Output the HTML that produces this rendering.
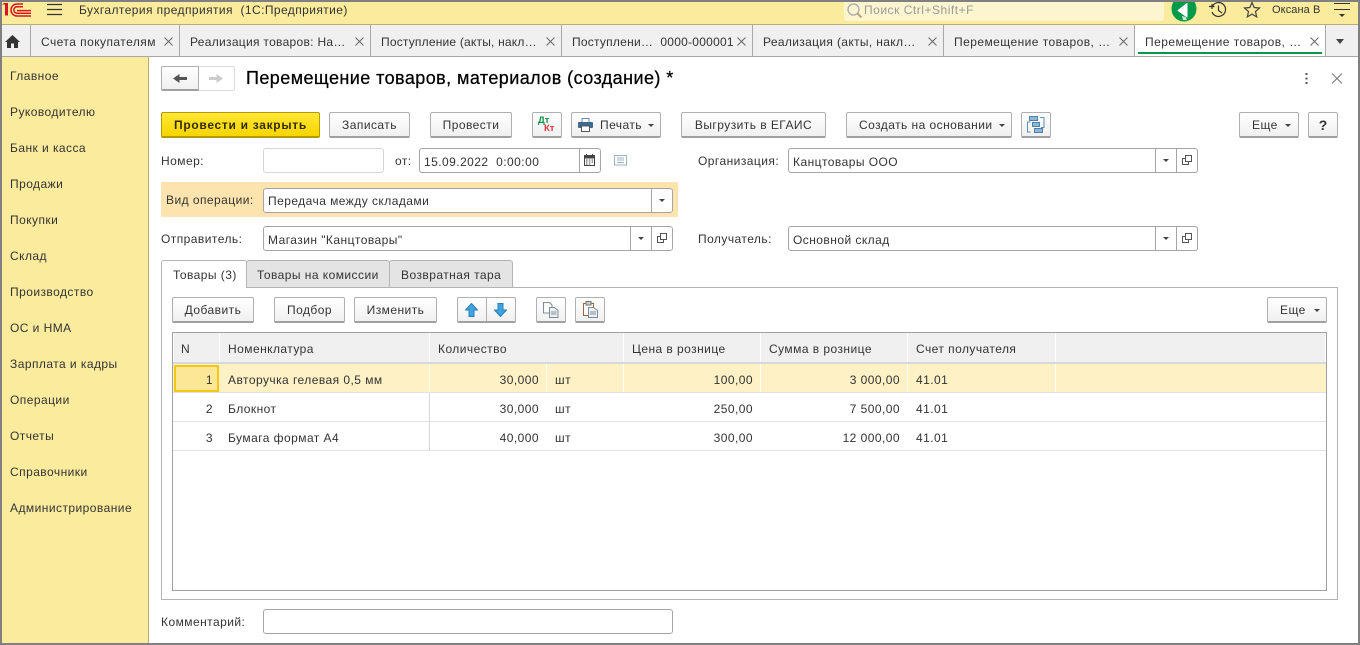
<!DOCTYPE html>
<html lang="ru"><head><meta charset="utf-8"><title>Перемещение товаров</title>
<style>
html,body{margin:0;padding:0;width:1360px;height:645px;overflow:hidden;background:#fff}
body{position:relative;font-family:"Liberation Sans",Arial,sans-serif;font-size:12px;color:#333}
.a,.t,.b,.f,svg{position:absolute}
.t{white-space:nowrap;line-height:16px;letter-spacing:.45px}
.b{box-sizing:border-box;height:26px;top:112px;border:1px solid #b0b0b0;border-bottom:2px solid #a0a0a0;border-radius:2px;background:linear-gradient(#fff,#f0f0f0);text-align:center;line-height:25px;letter-spacing:.45px;white-space:nowrap}
.f{box-sizing:border-box;border:1px solid #a5a5a5;border-radius:3px;background:#fff;height:25px}
.l{position:absolute;background:#d0d0d0}
.s{position:absolute;width:0;height:0;border-left:3px solid transparent;border-right:3px solid transparent;border-top:3px solid #444}
.tab{position:absolute;top:25px;height:31px;background:#f0f0f0;border-right:1px solid #a8a8a8;box-sizing:content-box}
.h{position:absolute;top:333px;height:29px;background:#f0f0f0}
.r{text-align:right}
.x{top:37px}
</style></head><body>
<!-- frame -->
<div class="a" style="left:0;top:0;width:1360px;height:2px;background:#808080"></div>
<div class="a" style="left:0;top:643px;width:1360px;height:2px;background:#808080"></div>
<div class="a" style="left:0;top:0;width:2px;height:645px;background:#808080"></div>
<div class="a" style="left:1358px;top:0;width:2px;height:645px;background:#808080"></div>
<!-- top bar -->
<div class="a" style="left:2px;top:2px;width:1356px;height:22px;background:#fbeb9d"></div>
<div class="a" style="left:2px;top:24px;width:1356px;height:1px;background:#b9ae74"></div>
<svg style="left:2px;top:2px" width="30" height="15" viewBox="0 0 30 15"><path d="M0 2.500h3v11h3V1H2z" fill="#d9141e"/><path d="M29 14H15a6 6 0 0 1 0-12h6M29 11.200H15a3.200 3.200 0 0 1 0-6.400h6M29 8.600H15" fill="none" stroke="#d9141e" stroke-width="1.500"/></svg>
<svg style="left:47px;top:3px" width="15" height="13"><path d="M0 1.500h15M0 6.500h15M0 11.500h15" stroke="#333" stroke-width="1.200"/></svg>
<div class="t" style="left:79px;top:2px;letter-spacing:.42px">Бухгалтерия предприятия&nbsp; (1С:Предприятие)</div>
<div class="a" style="left:844px;top:2px;width:320px;height:19px;background:#fdf5cf;border-radius:0 0 3px 3px"></div>
<svg style="left:846px;top:2px" width="17" height="18"><circle cx="7.500" cy="7.500" r="5.500" fill="none" stroke="#aaa" stroke-width="1.300"/><path d="M11.500 11.500l4 4" stroke="#b8a878" stroke-width="2"/></svg>
<div class="t" style="left:864px;top:2px;color:#999;letter-spacing:.52px">Поиск Ctrl+Shift+F</div>
<svg style="left:1170px;top:2px" width="28" height="21" viewBox="0 0 28 21"><path d="M1.500 7A12.500 12.500 0 0 0 26.500 7c0-2.500-.6-5-1.800-7H3.300C2.100 2 1.500 4.500 1.500 7z" fill="#039a49"/><path d="M8 8.500L17 1.500v13.500z" fill="#fff" stroke="#fff" stroke-linejoin="round"/><path d="M12 14l1 4h4l-1.300-3z" fill="#cfe9d8"/></svg>
<svg style="left:1209px;top:1px" width="19" height="18" viewBox="0 0 19 18"><path d="M3.200 5.500A7 7 0 1 1 3 11" fill="none" stroke="#333" stroke-width="1.200"/><path d="M0 5.500h5.500M3 3v5" stroke="#333" stroke-width="1.200"/><path d="M9.500 4.500v5l3.500 2.500" fill="none" stroke="#333" stroke-width="1.200"/></svg>
<svg style="left:1243px;top:1px" width="18" height="17" viewBox="0 0 18 17"><path d="M9 1.500l2.200 5 5.300.5-4 3.600 1.200 5.300L9 13.100l-4.700 2.800 1.200-5.300-4-3.600 5.300-.5z" fill="none" stroke="#444" stroke-width="1.200"/></svg>
<div class="t" style="left:1272px;top:2px;font-size:11px;letter-spacing:.1px">Оксана В</div>
<svg style="left:1334px;top:3px" width="16" height="15"><path d="M0 .5h16M0 6.500h16" stroke="#333"/><path d="M5 11h6l-3 3z" fill="#333"/></svg>
<!-- tabs -->
<div class="tab" style="left:2px;width:28px"></div>
<svg style="left:5px;top:35px" width="15" height="13" viewBox="0 0 15 13"><path d="M7.500 0L0 7h2v6h4V8.500h3V13h4V7h2z" fill="#333"/></svg>
<div class="tab" style="left:31px;width:148px"></div><div class="t" style="left:41px;top:34px">Счета покупателям</div>
<svg class="x" style="left:164px" width="9" height="9"><path d="M.5.500l8 8M8.500.500l-8 8" stroke="#666"/></svg>
<div class="tab" style="left:180px;width:190px"></div><div class="t" style="left:190px;top:34px;letter-spacing:.3px">Реализация товаров: На…</div>
<svg class="x" style="left:355px" width="9" height="9"><path d="M.5.500l8 8M8.500.500l-8 8" stroke="#666"/></svg>
<div class="tab" style="left:371px;width:190px"></div><div class="t" style="left:381px;top:34px;letter-spacing:.2px">Поступление (акты, накл…</div>
<svg class="x" style="left:546px" width="9" height="9"><path d="M.5.500l8 8M8.500.500l-8 8" stroke="#666"/></svg>
<div class="tab" style="left:562px;width:190px"></div><div class="t" style="left:572px;top:34px;letter-spacing:.25px">Поступлени…&nbsp; 0000-000001</div>
<svg class="x" style="left:737px" width="9" height="9"><path d="M.5.500l8 8M8.500.500l-8 8" stroke="#666"/></svg>
<div class="tab" style="left:753px;width:190px"></div><div class="t" style="left:763px;top:34px;letter-spacing:.35px">Реализация (акты, накл…</div>
<svg class="x" style="left:928px" width="9" height="9"><path d="M.5.500l8 8M8.500.500l-8 8" stroke="#666"/></svg>
<div class="tab" style="left:944px;width:190px"></div><div class="t" style="left:954px;top:34px">Перемещение товаров, …</div>
<svg class="x" style="left:1119px" width="9" height="9"><path d="M.5.500l8 8M8.500.500l-8 8" stroke="#666"/></svg>
<div class="tab" style="left:1135px;width:190px;background:#fff"></div><div class="t" style="left:1145px;top:34px">Перемещение товаров, …</div>
<svg class="x" style="left:1310px" width="9" height="9"><path d="M.5.500l8 8M8.500.500l-8 8" stroke="#666"/></svg>
<div class="a" style="left:1138px;top:52px;width:184px;height:2px;background:#039a49"></div>
<div class="a" style="left:1326px;top:25px;width:32px;height:31px;background:#f0f0f0"></div>
<div class="s" style="left:1336px;top:39px;border-left-width:4px;border-right-width:4px;border-top-width:5px"></div>
<div class="a" style="left:2px;top:56px;width:1356px;height:1px;background:#a8a8a8"></div>
<!-- sidebar -->
<div class="a" style="left:2px;top:57px;width:146px;height:586px;background:#fbeb9d;border-right:1px solid #b9ae74"></div>
<div class="t" style="left:10px;top:68px">Главное</div>
<div class="t" style="left:10px;top:104px">Руководителю</div>
<div class="t" style="left:10px;top:140px">Банк и касса</div>
<div class="t" style="left:10px;top:176px">Продажи</div>
<div class="t" style="left:10px;top:212px">Покупки</div>
<div class="t" style="left:10px;top:248px">Склад</div>
<div class="t" style="left:10px;top:284px">Производство</div>
<div class="t" style="left:10px;top:320px">ОС и НМА</div>
<div class="t" style="left:10px;top:356px">Зарплата и кадры</div>
<div class="t" style="left:10px;top:392px">Операции</div>
<div class="t" style="left:10px;top:428px">Отчеты</div>
<div class="t" style="left:10px;top:464px">Справочники</div>
<div class="t" style="left:10px;top:500px">Администрирование</div>
<!-- title -->
<div class="a" style="box-sizing:border-box;left:161px;top:66px;width:38px;height:25px;border:1px solid #b0b0b0;border-bottom:2px solid #a0a0a0;border-radius:2px 0 0 2px;background:linear-gradient(#fff,#f0f0f0)"></div>
<div class="a" style="box-sizing:border-box;left:199px;top:66px;width:36px;height:25px;border:1px solid #ddd;border-left:0;border-radius:0 2px 2px 0;background:#fff"></div>
<svg style="left:173px;top:73px" width="15" height="11"><path d="M14 5.500H6" stroke="#555" stroke-width="3"/><path d="M0 5.500L6.500 1v9z" fill="#555"/></svg>
<svg style="left:208px;top:73px" width="15" height="11"><path d="M1 5.500h8" stroke="#ccc" stroke-width="3"/><path d="M15 5.500L8.500 1v9z" fill="#ccc"/></svg>
<div class="t" style="left:246px;top:67px;font-size:18px;line-height:22px;color:#000;letter-spacing:.43px;-webkit-text-stroke:.25px #000">Перемещение товаров, материалов (создание) *</div>
<svg style="left:1304px;top:73px" width="6" height="11"><path d="M1.500 0h2v2h-2zM1.500 4.500h2v2h-2zM1.500 9h2v2h-2z" fill="#555"/></svg>
<svg style="left:1331px;top:73px" width="12" height="11"><path d="M1 .5l10 10M11 .5l-10 10" stroke="#777"/></svg>
<!-- buttons -->
<div class="b" style="left:161px;width:159px;background:linear-gradient(#ffe735,#f7d500);border-color:#b49c00;font-weight:bold;color:#332c00;letter-spacing:.7px">Провести и закрыть</div>
<div class="b" style="left:329px;width:81px">Записать</div>
<div class="b" style="left:430px;width:82px">Провести</div>
<div class="b" style="left:532px;width:30px"></div>
<div class="t" style="left:538px;top:116px;font-size:9.500px;line-height:10px;color:#12924a;letter-spacing:0;font-weight:bold">Дт</div>
<div class="t" style="left:544px;top:124px;font-size:9.500px;line-height:10px;color:#e0353a;letter-spacing:0;font-weight:bold">Кт</div>
<div class="b" style="left:571px;width:90px;text-align:left;padding-left:28px">Печать</div>
<svg style="left:578px;top:118px" width="15" height="14" viewBox="0 0 15 14"><rect x="4" y=".5" width="7" height="4" fill="#fff" stroke="#6e8ca8"/><rect x="0" y="4" width="15" height="6" rx="1" fill="#3f6a90"/><rect x="3.500" y="8" width="8" height="5.500" fill="#fff" stroke="#556"/></svg>
<div class="s" style="left:648px;top:124px"></div>
<div class="b" style="left:681px;width:145px">Выгрузить в ЕГАИС</div>
<div class="b" style="left:846px;width:166px;text-align:left;padding-left:12px">Создать на основании</div>
<div class="s" style="left:999px;top:124px"></div>
<div class="b" style="left:1021px;width:30px"></div>
<svg style="left:1027px;top:116px" width="18" height="18" viewBox="0 0 18 18"><path d="M3.500 6H.5v10h3M13 1.500h4v10h-3" fill="none" stroke="#5b8fb9"/><rect x="2.500" y=".5" width="8" height="4" fill="#8fb6d6" stroke="#4e82ad"/><rect x="5.500" y="6.500" width="7" height="4" fill="#8fb6d6" stroke="#4e82ad"/><rect x="7.500" y="12.500" width="8" height="4" fill="#8fb6d6" stroke="#4e82ad"/></svg>
<div class="b" style="left:1239px;width:60px;text-align:left;padding-left:12px">Еще</div>
<div class="s" style="left:1285px;top:124px"></div>
<div class="b" style="left:1308px;width:30px;font-size:14px;font-weight:bold;letter-spacing:0">?</div>
<!-- row number -->
<div class="t" style="left:161px;top:153px">Номер:</div>
<div class="f" style="left:263px;top:148px;width:121px;border-color:#d4d4d4"></div>
<div class="t" style="left:395px;top:153px">от:</div>
<div class="f" style="left:419px;top:148px;width:182px"></div>
<div class="t" style="left:424px;top:154px">15.09.2022&nbsp; 0:00:00</div>
<div class="l" style="left:579px;top:149px;width:1px;height:23px;background:#a5a5a5"></div>
<svg style="left:584px;top:154px" width="11" height="12" viewBox="0 0 11 12"><path d="M2.500 0v2M8.500 0v2" stroke="#444"/><rect x=".5" y="1.500" width="10" height="10" fill="#fff" stroke="#444"/><rect x="1" y="2" width="9" height="2.500" fill="#444"/><path d="M2 6h1.500M4.800 6h1.500M7.600 6h1.500M2 8h1.500M4.800 8h1.500M7.600 8h1.500M2 10h1.500M4.800 10h1.500" stroke="#444"/></svg>
<svg style="left:614px;top:155px" width="13" height="11"><rect x=".5" y=".5" width="12" height="9.500" fill="#fff" stroke="#9fb2c4"/><path d="M3 3h7M3 5h7M3 7.500h7" stroke="#9fb2c4"/></svg>
<div class="t" style="left:698px;top:153px">Организация:</div>
<div class="f" style="left:788px;top:148px;width:410px"></div>
<div class="t" style="left:793px;top:154px">Канцтовары ООО</div>
<div class="l" style="left:1155px;top:149px;width:1px;height:23px;background:#a5a5a5"></div>
<div class="l" style="left:1176px;top:149px;width:1px;height:23px;background:#a5a5a5"></div>
<div class="s" style="left:1163px;top:159px"></div>
<svg style="left:1182px;top:155px" width="10" height="10"><path d="M3.500 3.500H.5v6h6V7" fill="none" stroke="#555"/><rect x="3.500" y=".5" width="6" height="6" fill="none" stroke="#555"/></svg>
<!-- operation -->
<div class="a" style="left:161px;top:182px;width:517px;height:35px;background:#fde4ae"></div>
<div class="t" style="left:166px;top:192px">Вид операции:</div>
<div class="f" style="left:263px;top:188px;width:410px"></div>
<div class="t" style="left:268px;top:193px">Передача между складами</div>
<div class="l" style="left:651px;top:189px;width:1px;height:23px;background:#a5a5a5"></div>
<div class="s" style="left:659px;top:199px"></div>
<!-- sender -->
<div class="t" style="left:161px;top:231px">Отправитель:</div>
<div class="f" style="left:263px;top:226px;width:410px"></div>
<div class="t" style="left:268px;top:232px">Магазин "Канцтовары"</div>
<div class="l" style="left:630px;top:227px;width:1px;height:23px;background:#a5a5a5"></div>
<div class="l" style="left:651px;top:227px;width:1px;height:23px;background:#a5a5a5"></div>
<div class="s" style="left:638px;top:237px"></div>
<svg style="left:657px;top:233px" width="10" height="10"><path d="M3.500 3.500H.5v6h6V7" fill="none" stroke="#555"/><rect x="3.500" y=".5" width="6" height="6" fill="none" stroke="#555"/></svg>
<div class="t" style="left:698px;top:231px">Получатель:</div>
<div class="f" style="left:788px;top:226px;width:410px"></div>
<div class="t" style="left:793px;top:232px">Основной склад</div>
<div class="l" style="left:1155px;top:227px;width:1px;height:23px;background:#a5a5a5"></div>
<div class="l" style="left:1176px;top:227px;width:1px;height:23px;background:#a5a5a5"></div>
<div class="s" style="left:1163px;top:237px"></div>
<svg style="left:1182px;top:233px" width="10" height="10"><path d="M3.500 3.500H.5v6h6V7" fill="none" stroke="#555"/><rect x="3.500" y=".5" width="6" height="6" fill="none" stroke="#555"/></svg>
<!-- panel -->
<div class="a" style="box-sizing:border-box;left:161px;top:287px;width:1177px;height:313px;border:1px solid #b4b4b4;background:#fff"></div>
<div class="a" style="box-sizing:border-box;left:246px;top:260px;width:144px;height:28px;border:1px solid #b4b4b4;border-radius:3px 3px 0 0;background:#e4e4e4"></div>
<div class="a" style="box-sizing:border-box;left:389px;top:260px;width:124px;height:28px;border:1px solid #b4b4b4;border-radius:3px 3px 0 0;background:#e4e4e4"></div>
<div class="a" style="box-sizing:border-box;left:161px;top:260px;width:86px;height:28px;border:1px solid #b4b4b4;border-bottom:0;border-radius:3px 3px 0 0;background:#fff"></div>
<div class="t" style="left:173px;top:267px">Товары (3)</div>
<div class="t" style="left:257px;top:267px">Товары на комиссии</div>
<div class="t" style="left:401px;top:267px">Возвратная тара</div>
<!-- table toolbar -->
<div class="b" style="left:172px;top:297px;width:82px">Добавить</div>
<div class="b" style="left:274px;top:297px;width:71px">Подбор</div>
<div class="b" style="left:354px;top:297px;width:83px">Изменить</div>
<div class="b" style="left:457px;top:297px;width:30px;border-radius:2px 0 0 2px"></div>
<div class="b" style="left:486px;top:297px;width:30px;border-radius:0 2px 2px 0"></div>
<svg style="left:465px;top:303px" width="13" height="14"><path d="M6.500 .5L.5 7h3.500v6.500h5V7h3.500z" fill="#3ea3e0" stroke="#2a80b8"/></svg>
<svg style="left:494px;top:303px" width="13" height="14"><path d="M6.500 13.500L.5 7h3.500V.5h5V7h3.500z" fill="#3ea3e0" stroke="#2a80b8"/></svg>
<div class="b" style="left:536px;top:297px;width:30px"></div>
<svg style="left:543px;top:302px" width="16" height="16"><path d="M.5.500h6l2.500 2.500v8h-8.500z" fill="#fff" stroke="#7d8c9a"/><path d="M6.500 5.500h5l3.500 3v7h-8.500z" fill="#eef1f4" stroke="#7d8c9a"/><path d="M8 10h5.500M8 12h5.500" stroke="#7d8c9a"/></svg>
<div class="b" style="left:575px;top:297px;width:30px"></div>
<svg style="left:583px;top:301px" width="15" height="17"><rect x=".5" y="2.500" width="10" height="12" fill="#fff" stroke="#a0623a"/><rect x="3" y=".5" width="5" height="3.500" fill="#ccc" stroke="#777"/><path d="M5.500 6.500h5l4 3v7h-9z" fill="#eef1f4" stroke="#7d8c9a"/><path d="M7 11h6M7 13h6" stroke="#7d8c9a"/></svg>
<div class="b" style="left:1267px;top:297px;width:60px;text-align:left;padding-left:12px">Еще</div>
<div class="s" style="left:1314px;top:309px"></div>
<!-- table -->
<div class="a" style="box-sizing:border-box;left:172px;top:332px;width:1155px;height:259px;border:1px solid #a0a0a0;background:#fff"></div>
<div class="h" style="left:174px;width:45px"></div>
<div class="h" style="left:220px;width:209px"></div>
<div class="h" style="left:430px;width:193px"></div>
<div class="h" style="left:624px;width:136px"></div>
<div class="h" style="left:761px;width:146px"></div>
<div class="h" style="left:908px;width:147px"></div>
<div class="h" style="left:1056px;width:269px"></div>
<div class="a" style="left:173px;top:362px;width:1153px;height:2px;background:#d8d8d8"></div>
<div class="t" style="left:181px;top:341px">N</div>
<div class="t" style="left:228px;top:341px">Номенклатура</div>
<div class="t" style="left:438px;top:341px">Количество</div>
<div class="t" style="left:632px;top:341px">Цена в рознице</div>
<div class="t" style="left:769px;top:341px">Сумма в рознице</div>
<div class="t" style="left:916px;top:341px">Счет получателя</div>
<!-- rows -->
<div class="a" style="left:173px;top:364px;width:1153px;height:28px;background:#fdf1c5"></div>
<div class="a" style="box-sizing:border-box;left:174px;top:365px;width:45px;height:27px;border:2px solid #f5c518;background:#fbe795"></div>
<div class="a" style="left:429px;top:364px;width:1px;height:28px;background:#fff"></div>
<div class="a" style="left:546px;top:364px;width:1px;height:28px;background:#fff"></div>
<div class="a" style="left:623px;top:364px;width:1px;height:28px;background:#fff"></div>
<div class="a" style="left:760px;top:364px;width:1px;height:28px;background:#fff"></div>
<div class="a" style="left:907px;top:364px;width:1px;height:28px;background:#fff"></div>
<div class="a" style="left:1055px;top:364px;width:1px;height:28px;background:#fff"></div>
<div class="a" style="left:173px;top:392px;width:1153px;height:1px;background:#e2e2e2"></div>
<div class="a" style="left:173px;top:421px;width:1153px;height:1px;background:#e2e2e2"></div>
<div class="a" style="left:173px;top:450px;width:1153px;height:1px;background:#e2e2e2"></div>
<div class="a" style="left:429px;top:393px;width:1px;height:57px;background:#d8d8d8"></div>

<div class="t r" style="left:174px;width:39px;top:372px">1</div>
<div class="t" style="left:228px;top:372px">Авторучка гелевая 0,5 мм</div>
<div class="t r" style="left:440px;width:99px;top:372px">30,000</div>
<div class="t" style="left:555px;top:372px">шт</div>
<div class="t r" style="left:640px;width:113px;top:372px">100,00</div>
<div class="t r" style="left:770px;width:130px;top:372px">3 000,00</div>
<div class="t" style="left:916px;top:372px">41.01</div>

<div class="t r" style="left:174px;width:39px;top:401px">2</div>
<div class="t" style="left:228px;top:401px">Блокнот</div>
<div class="t r" style="left:440px;width:99px;top:401px">30,000</div>
<div class="t" style="left:555px;top:401px">шт</div>
<div class="t r" style="left:640px;width:113px;top:401px">250,00</div>
<div class="t r" style="left:770px;width:130px;top:401px">7 500,00</div>
<div class="t" style="left:916px;top:401px">41.01</div>

<div class="t r" style="left:174px;width:39px;top:430px">3</div>
<div class="t" style="left:228px;top:430px">Бумага формат А4</div>
<div class="t r" style="left:440px;width:99px;top:430px">40,000</div>
<div class="t" style="left:555px;top:430px">шт</div>
<div class="t r" style="left:640px;width:113px;top:430px">300,00</div>
<div class="t r" style="left:770px;width:130px;top:430px">12 000,00</div>
<div class="t" style="left:916px;top:430px">41.01</div>
<!-- comment -->
<div class="t" style="left:161px;top:614px">Комментарий:</div>
<div class="f" style="left:263px;top:609px;width:410px"></div>
</body></html>
